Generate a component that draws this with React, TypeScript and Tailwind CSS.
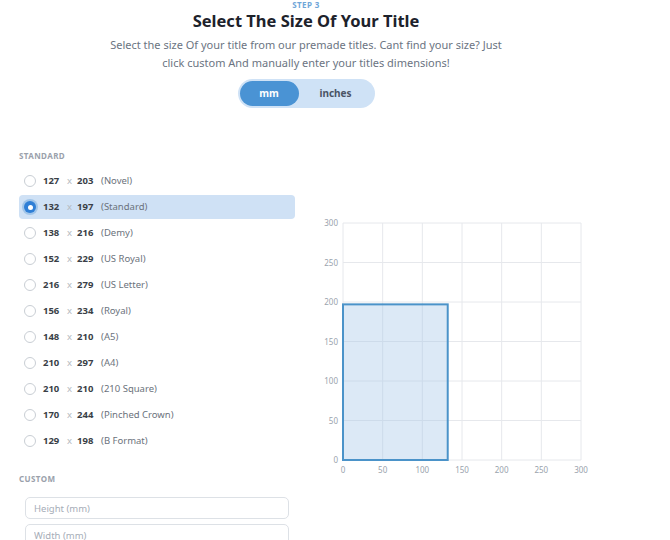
import React, { useState } from 'react'

type Size = { w: number; h: number; name: string }

const SIZES: Size[] = [
  { w: 127, h: 203, name: 'Novel' },
  { w: 132, h: 197, name: 'Standard' },
  { w: 138, h: 216, name: 'Demy' },
  { w: 152, h: 229, name: 'US Royal' },
  { w: 216, h: 279, name: 'US Letter' },
  { w: 156, h: 234, name: 'Royal' },
  { w: 148, h: 210, name: 'A5' },
  { w: 210, h: 297, name: 'A4' },
  { w: 210, h: 210, name: '210 Square' },
  { w: 170, h: 244, name: 'Pinched Crown' },
  { w: 129, h: 198, name: 'B Format' },
]

const TICKS = [0, 50, 100, 150, 200, 250, 300]

// plot area inside the svg
const PX0 = 28
const PX1 = 266
const PY0 = 10
const PY1 = 247

const sx = (v: number) => PX0 + (v / 300) * (PX1 - PX0)
const sy = (v: number) => PY1 - (v / 300) * (PY1 - PY0)

function SizeChart({ size }: { size: Size }) {
  return (
    <svg width={282} height={266} className="block">
      {TICKS.map((t) => (
        <g key={t}>
          <line x1={sx(t)} x2={sx(t)} y1={PY0} y2={PY1} stroke="#e6e8ec" strokeWidth={1} />
          <line x1={PX0} x2={PX1} y1={sy(t)} y2={sy(t)} stroke="#e6e8ec" strokeWidth={1} />
          <text x={23} y={sy(t) + 3} textAnchor="end" fontSize={8} fill="#9aa3ad">
            {t}
          </text>
          <text x={sx(t)} y={260} textAnchor="middle" fontSize={8} fill="#9aa3ad">
            {t}
          </text>
        </g>
      ))}
      <rect
        x={sx(0)}
        y={sy(size.h)}
        width={sx(size.w) - sx(0)}
        height={sy(0) - sy(size.h)}
        fill="rgba(168,200,232,0.4)"
        stroke="#4b93c9"
        strokeWidth={2}
      />
    </svg>
  )
}

export default function App() {
  const [unit, setUnit] = useState<'mm' | 'inches'>('mm')
  const [selected, setSelected] = useState(1)

  return (
    <div className="w-[670px] h-[540px] overflow-hidden bg-white font-['Noto_Sans','Open_Sans',sans-serif] text-[#2a2f38]">
      <div className="w-[620px]">
        {/* Header */}
        <div className="w-[612px] flex flex-col items-center">
          <div className="text-[8px] font-bold tracking-wider text-[#6ea6d8] leading-[10px]">STEP 3</div>
          <h1 className="text-[16.5px] font-bold leading-[21px] text-[#1d222b]">
            Select The Size Of Your Title
          </h1>
          <p className="mt-[5px] text-center text-[11px] leading-[18px] text-[#6b7482] whitespace-nowrap">
            Select the size Of your title from our premade titles. Cant find your size? Just
            <br />
            click custom And manually enter your titles dimensions!
          </p>
          <div className="mt-[7px] flex items-center w-[137px] h-[29px] rounded-full bg-[#cfe2f6] p-[2px]">
            <button
              onClick={() => setUnit('mm')}
              className={`h-full w-[59px] rounded-full text-[10px] font-bold ${
                unit === 'mm' ? 'bg-[#4a93d4] text-white' : 'text-[#4a5566]'
              }`}
            >
              mm
            </button>
            <button
              onClick={() => setUnit('inches')}
              className={`h-full flex-1 rounded-full text-[10px] font-bold ${
                unit === 'inches' ? 'bg-[#4a93d4] text-white' : 'text-[#4a5566]'
              }`}
            >
              inches
            </button>
          </div>
        </div>

        {/* Body */}
        <div className="mt-[43px] flex px-[19px]">
          <div className="w-[276px] shrink-0">
            <div className="text-[8px] font-bold tracking-wider text-[#9aa1ab] leading-[10px]">STANDARD</div>
            <div className="mt-[8px] flex flex-col gap-[2px]">
              {SIZES.map((s, i) => {
                const on = i === selected
                return (
                  <div
                    key={s.name}
                    onClick={() => setSelected(i)}
                    className={`flex items-center h-[24px] pl-[5px] rounded-[4px] cursor-pointer ${
                      on ? 'bg-[#cfe1f5]' : ''
                    }`}
                  >
                    {on ? (
                      <span className="w-[12px] h-[12px] rounded-full bg-[#2f7fd6] shadow-[0_0_0_2px_rgba(74,147,212,0.35)] flex items-center justify-center">
                        <span className="w-[5px] h-[5px] rounded-full bg-white" />
                      </span>
                    ) : (
                      <span className="w-[12px] h-[12px] rounded-full border border-[#c9ced4] bg-white" />
                    )}
                    <span className="ml-[7px] text-[9.5px] font-bold text-[#3a3f47] w-[18px]">{s.w}</span>
                    <span className="ml-[6px] text-[9.5px] text-[#b4b9c0]">x</span>
                    <span className="ml-[5px] text-[9.5px] font-bold text-[#3a3f47] w-[18px]">{s.h}</span>
                    <span className="ml-[6px] text-[9.5px] text-[#6b727c]">({s.name})</span>
                  </div>
                )
              })}
            </div>

            <div className="mt-[21px] text-[8px] font-bold tracking-wider text-[#9aa1ab] leading-[10px]">CUSTOM</div>
            <div className="mt-[13px] pl-[6px] flex flex-col gap-[5px]">
              <input
                placeholder="Height (mm)"
                className="w-[264px] h-[22px] rounded-[5px] border border-[#dde1e6] px-[8px] text-[9.5px] placeholder:text-[#a6adb7] outline-none"
              />
              <input
                placeholder="Width (mm)"
                className="w-[264px] h-[22px] rounded-[5px] border border-[#dde1e6] px-[8px] text-[9.5px] placeholder:text-[#a6adb7] outline-none"
              />
            </div>
          </div>

          <div className="ml-[20px] mt-[62px] shrink-0">
            <SizeChart size={SIZES[selected]} />
          </div>
        </div>
      </div>
    </div>
  )
}
